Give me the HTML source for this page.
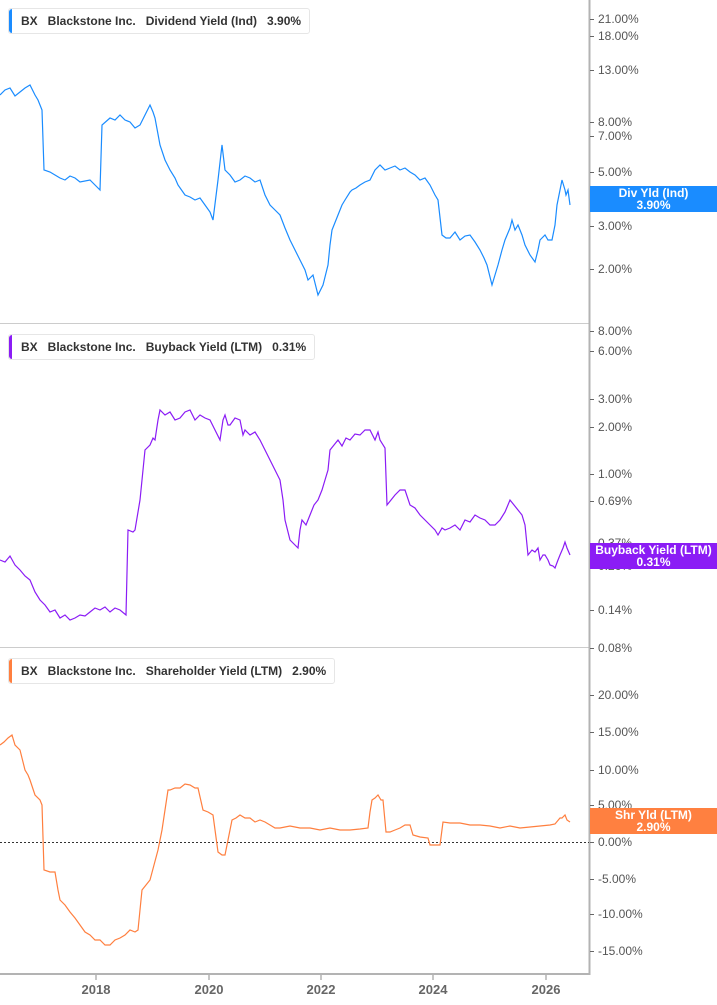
<!DOCTYPE html>
<html><head><meta charset="utf-8"><style>
body{margin:0;width:717px;height:1005px;background:#fff;overflow:hidden;font-family:"Liberation Sans",Arial,sans-serif;position:relative}
.lg{position:absolute;left:8px;height:24px;border:1px solid #e6e6e6;border-radius:3px;background:#fff;font-size:12px;font-weight:bold;color:#333;line-height:24px;padding-left:12px;padding-right:8px;white-space:pre}
.lg i{position:absolute;left:0;top:0;bottom:0;width:3px;border-radius:3px 0 0 3px}
.y{position:absolute;left:598px;font-size:12px;color:#555;transform:translateY(-7px)}
.t{position:absolute;left:590px;width:4px;height:1px;background:#666}
.b{position:absolute;left:590px;width:127px;color:#fff;font-size:12px;font-weight:bold;text-align:center;line-height:12px}
.x{position:absolute;top:982px;font-size:13px;font-weight:bold;color:#666;transform:translateX(-50%)}
</style></head><body>
<svg width="717" height="1005" style="position:absolute;left:0;top:0">
<line x1="0" y1="323.5" x2="589" y2="323.5" stroke="#ccc"/>
<line x1="0" y1="647.5" x2="589" y2="647.5" stroke="#ccc"/>
<line x1="589.5" y1="0" x2="589.5" y2="975" stroke="#b3b3b3" stroke-width="2"/>
<line x1="0" y1="974" x2="590" y2="974" stroke="#b3b3b3" stroke-width="2"/>
<g stroke="#b3b3b3" stroke-width="1.5"><line x1="96" y1="975" x2="96" y2="980"/><line x1="209" y1="975" x2="209" y2="980"/><line x1="321" y1="975" x2="321" y2="980"/><line x1="433" y1="975" x2="433" y2="980"/><line x1="546" y1="975" x2="546" y2="980"/></g>
<line x1="0" y1="842.5" x2="589" y2="842.5" stroke="#333" stroke-dasharray="2,2"/>
<polyline fill="none" stroke="#1a8cff" stroke-width="1.2" points="0,95 5,90 10,88 15,96 20,92 25,88 30,85 35,95 38,100 42,110 44,170 50,172 55,175 60,178 65,180 70,176 75,178 80,182 90,180 95,185 100,190 102,125 110,118 115,120 120,115 125,120 130,122 135,128 140,125 145,115 150,105 153,112 155,118 160,145 165,160 170,170 175,178 178,185 185,195 190,197 195,200 200,198 205,205 210,212 213,220 218,180 222,145 225,170 230,175 235,182 240,180 245,176 250,178 255,182 260,180 265,195 270,205 275,210 280,215 285,228 290,240 295,250 300,260 305,270 308,280 313,275 318,295 323,285 328,265 330,245 332,230 338,215 342,205 345,200 350,192 352,190 356,188 360,185 365,182 370,180 375,170 380,165 385,170 390,168 395,166 400,170 405,168 410,172 415,175 420,180 425,178 430,185 435,195 438,200 442,235 446,238 450,238 455,232 460,240 465,236 470,235 475,242 480,250 484,258 487,265 492,285 495,275 498,265 502,250 505,240 510,228 512,220 515,230 518,225 522,235 525,245 530,255 535,262 538,250 540,240 545,235 548,240 552,240 555,225 557,205 560,190 562,180 565,190 566,195 568,190 570,205"/>
<polyline fill="none" stroke="#8b1cf5" stroke-width="1.2" points="0,560 5,562 10,556 15,565 20,570 25,576 30,580 35,592 40,600 45,605 50,612 55,610 60,618 65,615 70,620 75,618 80,615 85,616 90,612 95,608 100,610 105,607 110,612 115,608 120,610 126,615 128,530 133,532 135,530 140,500 143,470 145,450 150,445 153,438 155,440 158,420 160,410 165,415 170,412 175,420 180,418 185,412 190,410 195,420 200,415 205,418 210,420 215,430 220,440 223,420 225,415 228,425 230,425 235,418 240,420 243,435 245,430 250,435 255,432 260,440 265,450 270,460 275,470 280,480 283,500 285,520 290,540 295,545 298,548 300,530 302,520 306,525 310,515 314,505 318,500 322,490 325,480 328,470 330,450 334,445 338,440 342,446 346,438 350,440 355,434 360,435 365,430 370,430 375,440 378,432 380,440 385,448 387,505 391,500 395,495 400,490 405,490 410,505 415,508 420,515 425,520 430,525 435,530 438,535 442,528 445,530 450,528 455,525 460,530 465,520 470,522 475,515 480,518 485,520 490,525 495,525 500,520 505,512 510,500 514,505 518,510 522,515 525,525 528,555 532,550 535,552 538,548 540,560 543,555 545,555 548,560 550,565 553,566 555,568 558,560 560,555 563,548 565,542 567,548 570,555"/>
<polyline fill="none" stroke="#ff7f3f" stroke-width="1.2" points="0,745 4,742 8,738 12,735 15,745 20,750 25,770 28,775 30,780 35,795 40,800 42,805 44,870 50,872 55,872 58,890 60,900 65,905 70,912 75,918 80,925 85,932 90,935 95,940 100,940 105,945 110,945 115,940 120,938 125,935 130,930 135,932 138,930 140,910 142,890 146,885 150,880 154,865 158,850 162,830 165,810 168,790 170,790 175,788 180,788 185,784 190,785 195,788 198,788 203,810 208,812 213,815 218,852 222,855 225,855 230,830 232,820 236,818 240,815 245,818 250,818 255,822 260,820 265,822 270,825 275,828 280,828 290,826 300,828 310,828 320,830 330,828 340,830 350,830 360,829 368,828 370,812 372,800 375,798 378,795 381,800 383,800 386,832 390,832 395,830 400,828 405,825 410,825 413,835 420,837 428,838 430,845 435,845 440,845 443,822 450,823 460,823 470,825 480,825 490,826 500,828 510,826 520,828 530,827 540,826 550,825 555,824 560,818 562,818 565,815 567,820 570,822"/>
</svg>
<div class="lg" style="top:8px"><i style="background:#1a8cff"></i>BX   Blackstone Inc.   Dividend Yield (Ind)   3.90%</div>
<div class="lg" style="top:334px"><i style="background:#8b1cf5"></i>BX   Blackstone Inc.   Buyback Yield (LTM)   0.31%</div>
<div class="lg" style="top:658px"><i style="background:#ff7f3f"></i>BX   Blackstone Inc.   Shareholder Yield (LTM)   2.90%</div>

<div class="t" style="top:19px"></div><div class="y" style="top:19px">21.00%</div>
<div class="t" style="top:36px"></div><div class="y" style="top:36px">18.00%</div>
<div class="t" style="top:70px"></div><div class="y" style="top:70px">13.00%</div>
<div class="t" style="top:122px"></div><div class="y" style="top:122px">8.00%</div>
<div class="t" style="top:136px"></div><div class="y" style="top:136px">7.00%</div>
<div class="t" style="top:172px"></div><div class="y" style="top:172px">5.00%</div>
<div class="t" style="top:226px"></div><div class="y" style="top:226px">3.00%</div>
<div class="t" style="top:269px"></div><div class="y" style="top:269px">2.00%</div>

<div class="t" style="top:331px"></div><div class="y" style="top:331px">8.00%</div>
<div class="t" style="top:351px"></div><div class="y" style="top:351px">6.00%</div>
<div class="t" style="top:399px"></div><div class="y" style="top:399px">3.00%</div>
<div class="t" style="top:427px"></div><div class="y" style="top:427px">2.00%</div>
<div class="t" style="top:474px"></div><div class="y" style="top:474px">1.00%</div>
<div class="t" style="top:501px"></div><div class="y" style="top:501px">0.69%</div>
<div class="t" style="top:543px"></div><div class="y" style="top:543px">0.37%</div>
<div class="t" style="top:566px"></div><div class="y" style="top:566px">0.26%</div>
<div class="t" style="top:610px"></div><div class="y" style="top:610px">0.14%</div>
<div class="t" style="top:648px"></div><div class="y" style="top:648px">0.08%</div>

<div class="t" style="top:695px"></div><div class="y" style="top:695px">20.00%</div>
<div class="t" style="top:732px"></div><div class="y" style="top:732px">15.00%</div>
<div class="t" style="top:770px"></div><div class="y" style="top:770px">10.00%</div>
<div class="t" style="top:805px"></div><div class="y" style="top:805px">5.00%</div>
<div class="t" style="top:842px"></div><div class="y" style="top:842px">0.00%</div>
<div class="t" style="top:879px"></div><div class="y" style="top:879px">-5.00%</div>
<div class="t" style="top:914px"></div><div class="y" style="top:914px">-10.00%</div>
<div class="t" style="top:951px"></div><div class="y" style="top:951px">-15.00%</div>

<div class="b" style="top:186px;height:25px;background:#1a8cff;padding-top:1px">Div Yld (Ind)<br>3.90%</div>
<div class="b" style="top:543px;height:25px;background:#8b1cf5;padding-top:1px">Buyback Yield (LTM)<br>0.31%</div>
<div class="b" style="top:808px;height:25px;background:#ff8040;padding-top:1px">Shr Yld (LTM)<br>2.90%</div>

<div class="x" style="left:96px">2018</div>
<div class="x" style="left:209px">2020</div>
<div class="x" style="left:321px">2022</div>
<div class="x" style="left:433px">2024</div>
<div class="x" style="left:546px">2026</div>
</body></html>
